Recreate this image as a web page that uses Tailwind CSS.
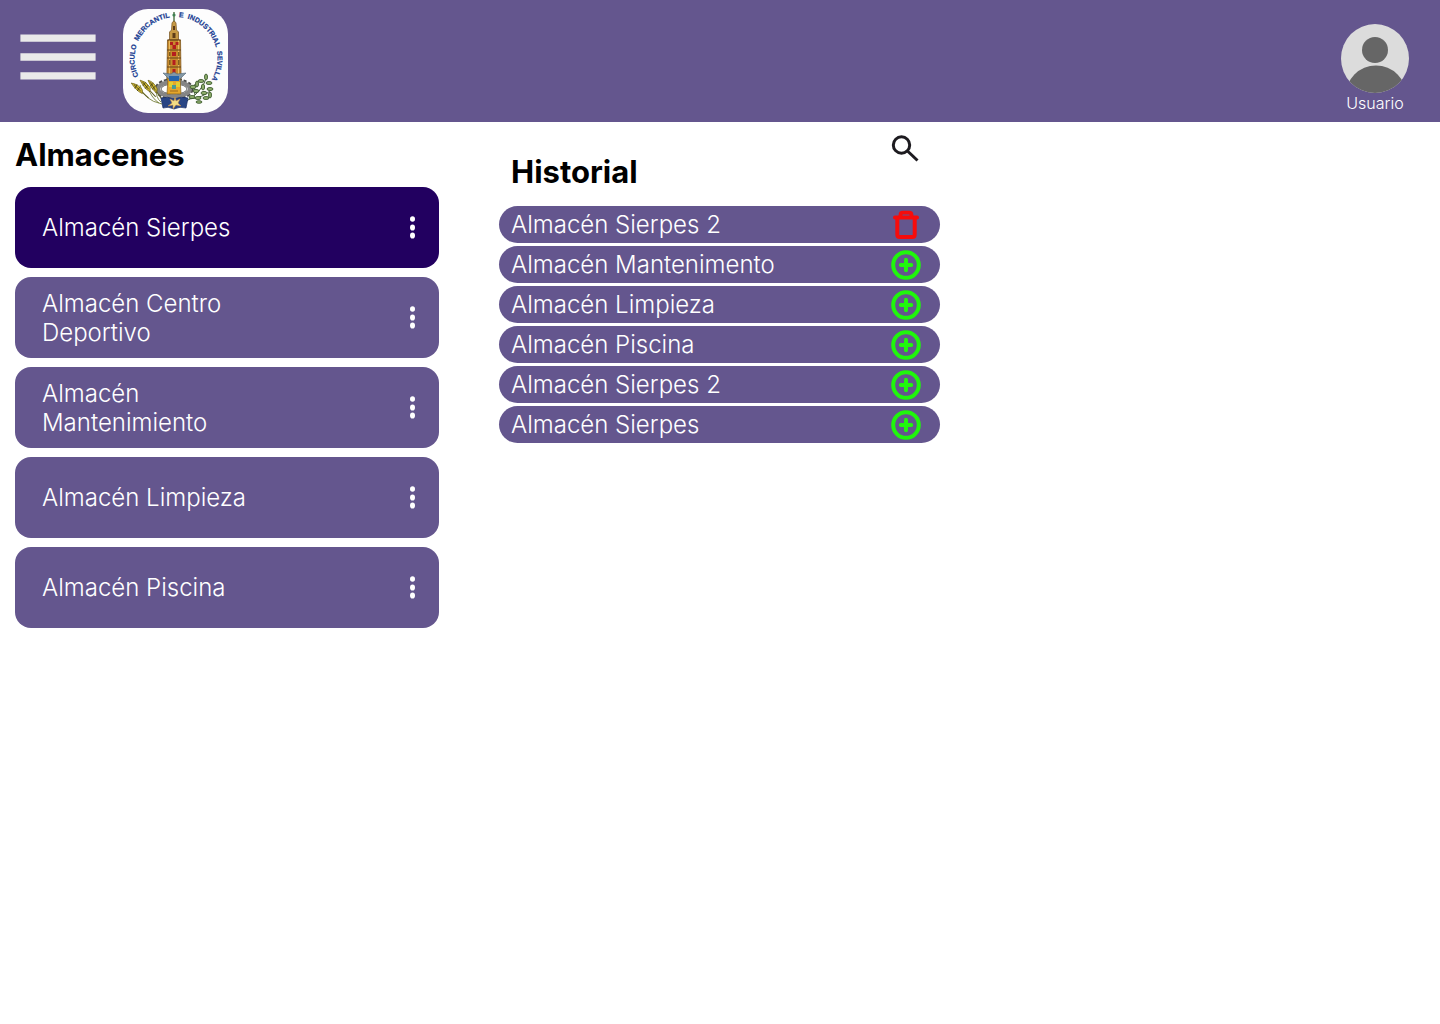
<!DOCTYPE html>
<html lang="es">
<head>
<meta charset="utf-8">
<meta name="viewport" content="width=device-width, initial-scale=1">
<title>Almacenes</title>
<script src="https://cdn.jsdelivr.net/npm/@tailwindcss/browser@4"></script>
</head>
<body class="min-h-screen bg-white font-['Inter',sans-serif] text-black">
<svg class="hidden" aria-hidden="true">
  <symbol id="kebab" viewBox="0 0 6 24"><g fill="#fff"><ellipse cx="3.500" cy="3" rx="2.500" ry="2.800"/><ellipse cx="3.500" cy="11.500" rx="2.500" ry="3.100"/><ellipse cx="3.500" cy="19.500" rx="2.500" ry="3.100"/></g></symbol>
  <symbol id="add" viewBox="0 0 30 30"><g fill="none" stroke="#20f60c"><circle cx="15" cy="15" r="12.800" stroke-width="4"/><path d="M15 9.800v10.400M9.800 15h10.400" stroke-width="4" stroke-linecap="round"/></g></symbol>
  <symbol id="trash" viewBox="0 0 30 30"><g fill="none" stroke="#f60c0c" stroke-width="4"><path d="M6.300 8v16.500q0 2.500 2.500 2.500h12.400q2.500 0 2.500-2.500V8"/><path d="M4 7.500h22" stroke-linecap="round"/><path d="M9.500 7V5q0-2.300 2.300-2.300h6.400q2.300 0 2.300 2.300v2" stroke-width="3.800"/></g></symbol>
  <symbol id="ear" viewBox="0 0 20 24"><path d="M4 22 9 13" stroke="#5f5f22" stroke-width="1" fill="none"/><path d="M7 15Q8 9 15 2 16 8 11 14Z" fill="#d5bd35" stroke="#6f651f" stroke-width=".7"/><path d="m9 13 5-8M8.500 9.500l4 1.500M10.500 6.500l4 1.500" stroke="#403d16" stroke-width=".8"/></symbol>
</svg>

<header class="flex h-[122px] items-start justify-between bg-[#64568e] pl-5 pr-[31px]">
  <div class="flex items-start gap-[27px]">
    <button type="button" aria-label="Abrir menú" class="mt-[34px] cursor-pointer">
      <svg class="block h-[46px] w-[76px]" viewBox="0 0 76 46" fill="#eaeaea"><path d="M.4.400h75.200v7.400H.4zM.4 19.300h75.200v7.400H.4zM.4 38.200h75.200v7.400H.4z"/></svg>
    </button>
    <a href="#" aria-label="Inicio" class="mt-[9px]">
      <svg class="block h-[104px] w-[105px]" viewBox="0 0 105 104">
        <rect width="105" height="104" rx="25" fill="#fdfdfd"/>
        <path id="arc" d="M53 91A41.500 41.500 0 0 1 53 8A41.500 41.500 0 0 1 53 91" fill="none"/>
        <g class="font-['Liberation_Sans',sans-serif] text-[7px] font-bold" fill="#173b91" stroke="#173b91" stroke-width=".2">
          <text text-anchor="end"><textPath href="#arc" startOffset="124">CIRCULO&nbsp; MERCANTIL</textPath></text>
          <text><textPath href="#arc" startOffset="133">E&nbsp; INDUSTRIAL&nbsp; SEVILLA</textPath></text>
        </g>
        <!-- Giralda -->
        <path d="M51 3v10" stroke="#55784c" stroke-width="1.500"/><circle cx="51" cy="6" r="1.600" fill="#3f8052"/>
        <path d="M48.500 21 49 14q2-4 4 0l.500 7 2 2v8h-9v-8z" fill="#c79a45" stroke="#74501f" stroke-width=".7"/>
        <path d="M50 17h2v4h-2zM49.500 24h3v5h-3z" fill="#5d3c18"/>
        <path d="M44.500 31h13l.600 42H43.800z" fill="#c88a2d" stroke="#7d571d" stroke-width=".8"/>
        <path d="M46.500 31v40M55.500 31v40" stroke="#e9bd63" stroke-width="1"/>
        <path d="M44.500 31h13M44 41h14M44 49h14M44 58h14" stroke="#674519" stroke-width="1"/>
        <g fill="#b51e1e"><path d="M47 33h3v3h-3zM52.500 33h3v3h-3zM49.500 36h3.500v4h-3.500zM49 43h4v4h-4zM49.500 51h3v5h-3zM49.500 60h3v4h-3z"/></g>
        <g fill="#81601f"><path d="M46 43h1.500v4H46zM55 43h1.500v4H55zM46 51h1.500v5H46zM55 51h1.500v5H55z"/></g>
        <!-- rueda dentada -->
        <ellipse cx="51" cy="80" rx="17" ry="8.500" fill="none" stroke="#494949" stroke-width="5" stroke-dasharray="3 1.700"/>
        <ellipse cx="51" cy="80" rx="16" ry="7.500" fill="none" stroke="#858585" stroke-width="4"/>
        <ellipse cx="51" cy="80" rx="13" ry="5" fill="#fff" stroke="#444" stroke-width=".8"/>
        <path d="M45 68h12l1 17H44z" fill="#e5a62b" stroke="#80601d" stroke-width=".7"/>
        <path d="m40 64 8 1 3-2 3 2 9-1-6 6H46z" fill="#8297a5" stroke="#526779" stroke-width=".6"/>
        <path d="M46 67h10v5H46z" fill="#2665ad"/><path d="M46 73h4v5h-4zM53 73h4v5h-4z" fill="#e3cf31"/><path d="M49 76h4v4h-4z" fill="#4b9c92"/><path d="M47 82h8" stroke="#9b6920"/>
        <!-- espigas -->
        <path d="M17 76Q20 91 39 95M24 76q4 13 12 18M34 80q-2 8 4 13" fill="none" stroke="#77813c" stroke-width=".9"/>
        <use href="#ear" x="22" y="68" width="20" height="24" transform="rotate(-65 32 80)"/>
        <use href="#ear" x="15" y="67" width="20" height="24" transform="rotate(-72 25 79)"/>
        <use href="#ear" x="7" y="69" width="20" height="24" transform="rotate(-78 17 81)"/>
        <!-- laurel -->
        <path d="M62 93q17-9 22-26M66 90q14-1 22-9M72 86q-2-6 0-11" fill="none" stroke="#3d5630" stroke-width="1"/>
        <g fill="#8fae6c" stroke="#3e5d30" stroke-width=".9">
          <ellipse cx="83" cy="68" rx="1.500" ry="3"/><ellipse cx="78" cy="72" rx="3" ry="1.500"/><ellipse cx="86" cy="74" rx="3" ry="1.500"/><ellipse cx="70" cy="78" rx="3" ry="1.700"/><ellipse cx="74" cy="75" rx="1.500" ry="3"/><ellipse cx="80" cy="78" rx="1.600" ry="3"/><ellipse cx="87" cy="80" rx="3" ry="1.500"/><ellipse cx="73" cy="82" rx="3" ry="1.600"/><ellipse cx="81" cy="84" rx="3" ry="1.600"/><ellipse cx="69" cy="88" rx="3" ry="1.500"/><ellipse cx="75" cy="89" rx="3" ry="1.500"/><ellipse cx="83" cy="89" rx="3" ry="1.500"/><ellipse cx="87" cy="86" rx="1.500" ry="3"/><ellipse cx="76" cy="93" rx="3" ry="1.300"/>
        </g>
        <!-- libro -->
        <path d="M38 89q7-2 13 1 7-3 14-1l-2 10q-6-2-12 1-6-3-11-1z" fill="#294584" stroke="#182d64" stroke-width=".7"/>
        <path d="m52 88 1 4 4-2-2 4 3 3-5-1-3 4v-4l-5 1 4-3-2-4 4 2z" fill="#f2dc85" stroke="#c98b43" stroke-width=".5"/>
      </svg>
    </a>
  </div>
  <a href="#" class="mt-6 flex flex-col items-center text-base leading-5 text-white">
    <svg class="h-[70px] w-[68px]" viewBox="0 0 68 70" aria-hidden="true"><clipPath id="face"><ellipse cx="34" cy="34.500" rx="34" ry="34.500"/></clipPath><g clip-path="url(#face)"><path fill="#dcdcdc" d="M0 0h68v70H0z"/><circle cx="34" cy="26" r="13" fill="#666"/><circle cx="35" cy="72" r="30.500" fill="#666"/></g></svg>
    <span class="-mt-px font-[350]">Usuario</span>
  </a>
</header>

<main class="grid grid-cols-[424fr_441fr_425fr] gap-x-15 px-[15px]">
  <section>
    <h1 class="pt-[13px] text-[31px] leading-10 font-bold">Almacenes</h1>
    <ul class="mt-3 flex flex-col gap-[9px] text-2xl leading-[29px] font-[350] text-white">
      <li class="flex h-[81px] items-center justify-between rounded-2xl bg-[#220060] pr-6 pl-[27px]"><a href="#" class="max-w-60">Almacén Sierpes</a><button type="button" aria-label="Opciones de Almacén Sierpes"><svg class="block h-6 w-1.5"><use href="#kebab"/></svg></button></li>
      <li class="flex h-[81px] items-center justify-between rounded-2xl bg-[#64568e] pr-6 pl-[27px]"><a href="#" class="max-w-60">Almacén Centro Deportivo</a><button type="button" aria-label="Opciones de Almacén Centro Deportivo"><svg class="block h-6 w-1.5"><use href="#kebab"/></svg></button></li>
      <li class="flex h-[81px] items-center justify-between rounded-2xl bg-[#64568e] pr-6 pl-[27px]"><a href="#" class="max-w-60">Almacén Mantenimiento</a><button type="button" aria-label="Opciones de Almacén Mantenimiento"><svg class="block h-6 w-1.5"><use href="#kebab"/></svg></button></li>
      <li class="flex h-[81px] items-center justify-between rounded-2xl bg-[#64568e] pr-6 pl-[27px]"><a href="#" class="max-w-60">Almacén Limpieza</a><button type="button" aria-label="Opciones de Almacén Limpieza"><svg class="block h-6 w-1.5"><use href="#kebab"/></svg></button></li>
      <li class="flex h-[81px] items-center justify-between rounded-2xl bg-[#64568e] pr-6 pl-[27px]"><a href="#" class="max-w-60">Almacén Piscina</a><button type="button" aria-label="Opciones de Almacén Piscina"><svg class="block h-6 w-1.5"><use href="#kebab"/></svg></button></li>
    </ul>
  </section>
  <section>
    <div class="flex items-start justify-between pt-[13px] pr-[21px] pl-3">
      <h2 class="pt-[17px] text-[31px] leading-10 font-bold">Historial</h2>
      <button type="button" aria-label="Buscar"><svg class="block h-7 w-7" viewBox="0 0 28 28" fill="none" stroke="#1d1b20" stroke-width="3"><circle cx="10.500" cy="10" r="8.200"/><path d="m16.500 16 10 9.500"/></svg></button>
    </div>
    <ul class="mt-3.5 flex flex-col gap-[3px] text-2xl leading-[37px] font-[350] text-white">
      <li class="flex h-[37px] items-center justify-between rounded-full bg-[#64568e] pr-[19px] pl-3"><span>Almacén Sierpes 2</span><svg class="h-[30px] w-[30px]" role="img" aria-label="Eliminado"><use href="#trash"/></svg></li>
      <li class="flex h-[37px] items-center justify-between rounded-full bg-[#64568e] pr-[19px] pl-3"><span>Almacén Mantenimento</span><svg class="h-[30px] w-[30px]" role="img" aria-label="Añadido"><use href="#add"/></svg></li>
      <li class="flex h-[37px] items-center justify-between rounded-full bg-[#64568e] pr-[19px] pl-3"><span>Almacén Limpieza</span><svg class="h-[30px] w-[30px]" role="img" aria-label="Añadido"><use href="#add"/></svg></li>
      <li class="flex h-[37px] items-center justify-between rounded-full bg-[#64568e] pr-[19px] pl-3"><span>Almacén Piscina</span><svg class="h-[30px] w-[30px]" role="img" aria-label="Añadido"><use href="#add"/></svg></li>
      <li class="flex h-[37px] items-center justify-between rounded-full bg-[#64568e] pr-[19px] pl-3"><span>Almacén Sierpes 2</span><svg class="h-[30px] w-[30px]" role="img" aria-label="Añadido"><use href="#add"/></svg></li>
      <li class="flex h-[37px] items-center justify-between rounded-full bg-[#64568e] pr-[19px] pl-3"><span>Almacén Sierpes</span><svg class="h-[30px] w-[30px]" role="img" aria-label="Añadido"><use href="#add"/></svg></li>
    </ul>
  </section>
</main>
</body>
</html>
